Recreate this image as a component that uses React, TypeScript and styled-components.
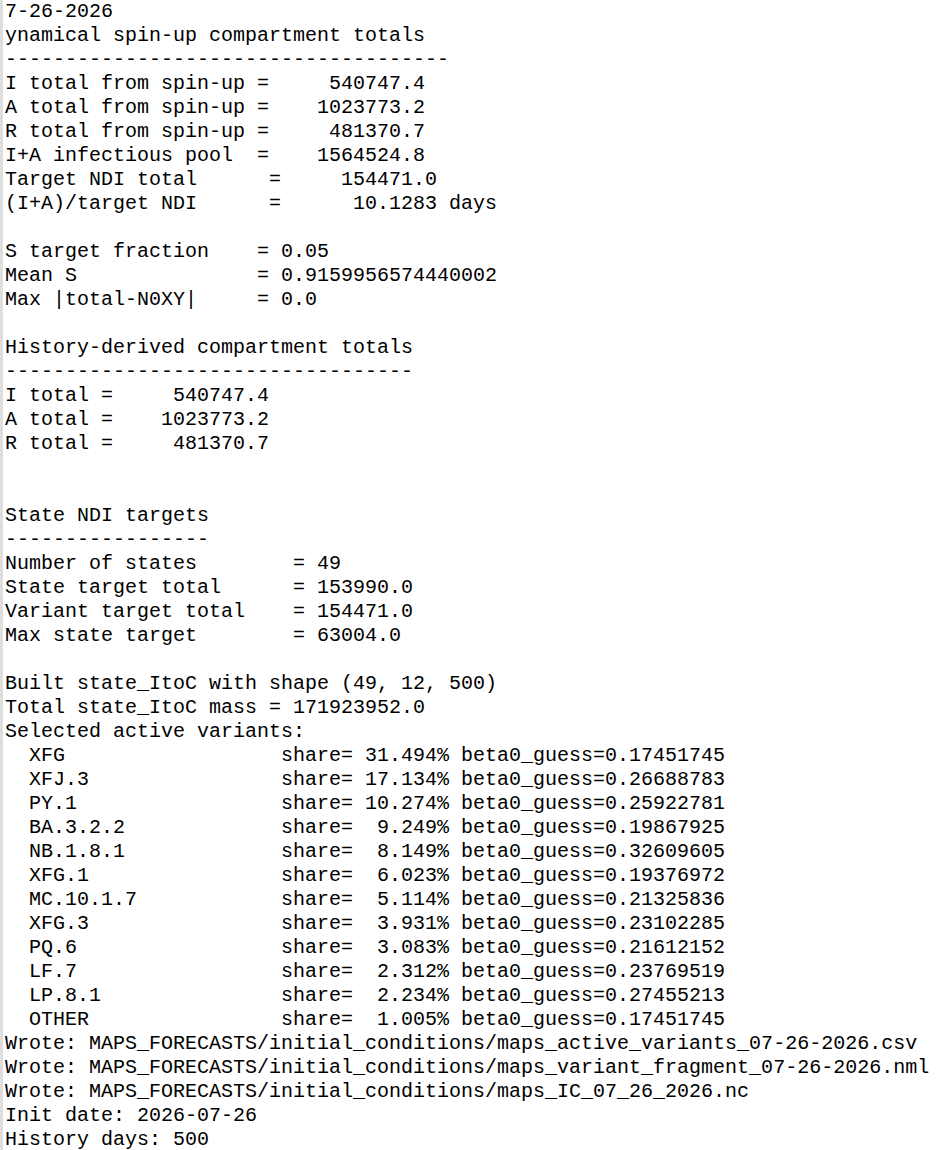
import React from "react";
import styled, { createGlobalStyle } from "styled-components";

const Global = createGlobalStyle`
  html, body {
    margin: 0;
    padding: 0;
    background: #ffffff;
  }
`;

const Console = styled.div`
  box-sizing: border-box;
  width: 937px;
  min-height: 1150px;
  border-left: 3px solid #dedede;
  padding: 0 0 0 2px;
  background: #ffffff;
  color: #000000;
  font-family: "Liberation Mono", "Courier New", monospace;
  font-size: 20px;
  line-height: 24px;
  overflow: hidden;
`;

const Line = styled.div`
  white-space: pre;
  height: 24px;
`;

const variants: [string, string, string][] = [
  ["XFG", "31.494", "0.17451745"],
  ["XFJ.3", "17.134", "0.26688783"],
  ["PY.1", "10.274", "0.25922781"],
  ["BA.3.2.2", "9.249", "0.19867925"],
  ["NB.1.8.1", "8.149", "0.32609605"],
  ["XFG.1", "6.023", "0.19376972"],
  ["MC.10.1.7", "5.114", "0.21325836"],
  ["XFG.3", "3.931", "0.23102285"],
  ["PQ.6", "3.083", "0.21612152"],
  ["LF.7", "2.312", "0.23769519"],
  ["LP.8.1", "2.234", "0.27455213"],
  ["OTHER", "1.005", "0.17451745"],
];

const pad = (s: string, n: number) => s + " ".repeat(Math.max(0, n - s.length));
const lpad = (s: string, n: number) => " ".repeat(Math.max(0, n - s.length)) + s;

const lines: string[] = [
  "7-26-2026",
  "ynamical spin-up compartment totals",
  "-".repeat(37),
  "I total from spin-up =     540747.4",
  "A total from spin-up =    1023773.2",
  "R total from spin-up =     481370.7",
  "I+A infectious pool  =    1564524.8",
  "Target NDI total      =     154471.0",
  "(I+A)/target NDI      =      10.1283 days",
  "",
  "S target fraction    = 0.05",
  "Mean S               = 0.9159956574440002",
  "Max |total-N0XY|     = 0.0",
  "",
  "History-derived compartment totals",
  "-".repeat(34),
  "I total =     540747.4",
  "A total =    1023773.2",
  "R total =     481370.7",
  "",
  "",
  "State NDI targets",
  "-".repeat(17),
  "Number of states        = 49",
  "State target total      = 153990.0",
  "Variant target total    = 154471.0",
  "Max state target        = 63004.0",
  "",
  "Built state_ItoC with shape (49, 12, 500)",
  "Total state_ItoC mass = 171923952.0",
  "Selected active variants:",
  ...variants.map(
    ([name, share, beta]) =>
      "  " + pad(name, 21) + "share=" + lpad(share, 7) + "% beta0_guess=" + beta
  ),
  "Wrote: MAPS_FORECASTS/initial_conditions/maps_active_variants_07-26-2026.csv",
  "Wrote: MAPS_FORECASTS/initial_conditions/maps_variant_fragment_07-26-2026.nml",
  "Wrote: MAPS_FORECASTS/initial_conditions/maps_IC_07_26_2026.nc",
  "Init date: 2026-07-26",
  "History days: 500",
];

export default function App() {
  return (
    <>
      <Global />
      <Console>
        {lines.map((l, i) => (
          <Line key={i}>{l}</Line>
        ))}
      </Console>
    </>
  );
}
